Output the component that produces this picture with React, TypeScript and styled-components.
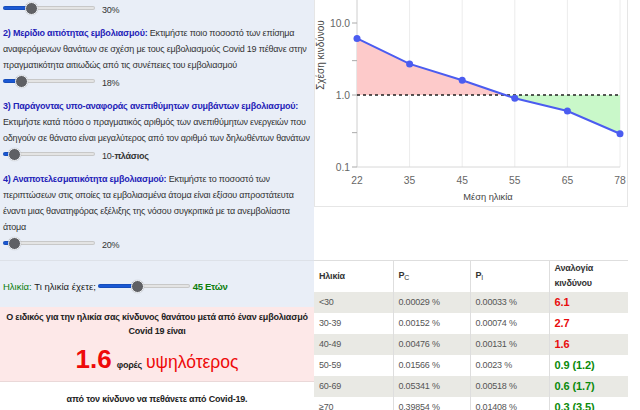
import React, { useState } from 'react';
import styled, { createGlobalStyle } from 'styled-components';

const FONT = '"Liberation Sans", Arial, sans-serif';

const GlobalStyle = createGlobalStyle`
  html, body {
    margin: 0;
    padding: 0;
    background: #fff;
  }

  body {
    font-family: ${FONT};
    font-size: 9px;
    letter-spacing: -0.2px;
    color: #333;
  }
`;

const Page = styled.div`
  display: grid;
  grid-template-columns: 314px 314px;
  grid-template-rows: 260px 150px;
  width: 628px;
  height: 410px;
  overflow: hidden;
`;

const SettingsPanel = styled.div`
  display: flex;
  flex-direction: column;
  background: #e9eef7;
  padding: 0 0 0 3px;
  overflow: hidden;
`;

const Para = styled.p`
  margin: 10px 0 0;
  line-height: 16px;
  color: #333;
`;

const Heading = styled.span`
  font-weight: bold;
  color: #1f22b8;
`;

const SliderRow = styled.div`
  display: flex;
  align-items: center;
  gap: 7px;
  height: 14px;
  margin-top: 1px;
`;

const SliderValue = styled.span`
  padding-top: 3px;
  color: #333;
`;

const Range = styled.input.attrs({ type: 'range' })<{ $width: number }>`
  -webkit-appearance: none;
  appearance: none;
  width: ${(p) => p.$width}px;
  height: 4px;
  margin: 0;
  border-radius: 2px;
  box-shadow: inset 0 0 0 1px rgba(0, 0, 0, 0.12);
  outline: none;
  flex-shrink: 0;

  &::-webkit-slider-thumb {
    -webkit-appearance: none;
    appearance: none;
    width: 13px;
    height: 13px;
    border-radius: 50%;
    background: #5f6064;
    border: 1px solid #f4f6fa;
    box-shadow: 0 0 1px rgba(0, 0, 0, 0.3);
    cursor: pointer;
  }
`;

type SliderProps = { min: number; max: number; initial: number; width?: number };

const Slider = ({ min, max, initial, width = 92 }: SliderProps) => {
  const [value, setValue] = useState(initial);
  const fill = 6.5 + ((value - min) / (max - min)) * (width - 13);
  return (
    <Range
      $width={width}
      min={min}
      max={max}
      value={value}
      onChange={(e) => setValue(Number(e.target.value))}
      style={{
        background: `linear-gradient(to right, #1a58d4 0, #1a58d4 ${fill}px, #e4e4e4 ${fill}px)`,
      }}
    />
  );
};

const ChartColumn = styled.div`
  background: #fff;
`;

const ChartCard = styled.div`
  height: 206px;
  border: 1px solid #e6e6e6;
  border-top: none;
  background: #fff;

  svg {
    display: block;
  }
`;

const ResultPanel = styled.div`
  display: flex;
  flex-direction: column;
  border-top: 1px solid #dde1e8;
`;

const AgeRow = styled.div`
  display: flex;
  align-items: center;
  height: 46px;
  padding: 4px 3px 0;
  box-sizing: border-box;
  background: #e9eef7;
  font-size: 9.5px;
  letter-spacing: 0;
  color: #222;
`;

const Green = styled.span<{ $bold?: boolean }>`
  color: #0b7d0b;
  font-weight: ${(p) => (p.$bold ? 'bold' : 'normal')};
  letter-spacing: ${(p) => (p.$bold ? '-0.3px' : '0')};
`;

const AgeSliderWrap = styled.span`
  margin: 0 3px 0 2px;
  display: flex;
  align-items: center;
`;

const RiskBox = styled.div`
  height: 75px;
  box-sizing: border-box;
  padding: 3px 2px 0;
  background: #fde8e8;
  border-bottom: 1px solid #ead8d8;
  text-align: center;
  font-weight: bold;
  color: #222;
  line-height: 14px;
`;

const BigLine = styled.div`
  margin-top: 5px;
  line-height: 32px;
  color: #ee0a0a;
`;

const BigNumber = styled.span`
  font-size: 26px;
  font-weight: bold;
  letter-spacing: 0;
`;

const Times = styled.span`
  color: #222;
  margin: 0 4px 0 5px;
`;

const Higher = styled.span`
  font-size: 17.5px;
  font-weight: normal;
  letter-spacing: 0;
`;

const Footer = styled.div`
  padding-top: 12px;
  text-align: center;
  font-weight: bold;
  color: #222;
`;

const Table = styled.table`
  width: 314px;
  border-collapse: collapse;
  table-layout: fixed;
  border-top: 1px solid #dedede;
`;

const Th = styled.th<{ $w: number }>`
  box-sizing: border-box;
  width: ${(p) => p.$w}px;
  height: 31px;
  padding: 0 5px;
  text-align: left;
  vertical-align: middle;
  font-weight: bold;
  color: #333;
  line-height: 15px;
  border-left: 1px solid #dedede;

  &:first-child {
    border-left: none;
  }

  sub {
    font-size: 7px;
    font-weight: normal;
    vertical-align: -2px;
  }
`;

const Tr = styled.tr<{ $shade: boolean }>`
  background: ${(p) => (p.$shade ? '#e9e9e4' : '#fff')};
`;

const Td = styled.td`
  height: 21px;
  padding: 0 5px;
  color: #555;
  border-left: 1px solid #dedede;

  &:first-child {
    border-left: none;
  }
`;

const Ratio = styled.td<{ $high: boolean }>`
  height: 21px;
  padding: 0 5px;
  border-left: 1px solid #dedede;
  font-size: 11px;
  letter-spacing: -0.1px;
  font-weight: bold;
  color: ${(p) => (p.$high ? '#e80c0c' : '#0b8a0b')};
`;

const rows = [
  ['<30', '0.00029 %', '0.00033 %', '6.1'],
  ['30-39', '0.00152 %', '0.00074 %', '2.7'],
  ['40-49', '0.00476 %', '0.00131 %', '1.6'],
  ['50-59', '0.01566 %', '0.0023 %', '0.9 (1.2)'],
  ['60-69', '0.05341 %', '0.00518 %', '0.6 (1.7)'],
  ['≥70', '0.39854 %', '0.01408 %', '0.3 (3.5)'],
];

const ages = [22, 35, 45, 55, 65, 78];
const risks = [6.1, 2.7, 1.6, 0.9, 0.6, 0.29];

const xAt = (i: number) => 42 + i * 52.6;
const yAt = (v: number) => 95 - 72 * Math.log10(v);

const RiskChart = () => {
  const pts = risks.map((v, i) => [xAt(i), yAt(v)]);
  // find where the curve crosses the 1.0 line
  let cross = 0;
  for (let i = 0; i < pts.length - 1; i++) {
    if (pts[i][1] <= 95 && pts[i + 1][1] > 95) {
      const t = (95 - pts[i][1]) / (pts[i + 1][1] - pts[i][1]);
      cross = pts[i][0] + t * (pts[i + 1][0] - pts[i][0]);
      break;
    }
  }
  const above = pts.filter((p) => p[1] <= 95);
  const below = pts.filter((p) => p[1] > 95);
  const red = [...above.map((p) => p.join(',')), `${cross},95`, `${pts[0][0]},95`].join(' ');
  const green = [`${cross},95`, ...below.map((p) => p.join(',')), `${pts[pts.length - 1][0]},95`].join(' ');
  const line = pts.map((p) => p.join(',')).join(' ');

  return (
    <svg width="312" height="206" viewBox="0 0 312 206" fontFamily={FONT} letterSpacing="0">
      {ages.map((a, i) => (
        <line key={a} x1={xAt(i)} y1={0} x2={xAt(i)} y2={167} stroke="#ececec" />
      ))}
      <line x1={42} y1={0} x2={42} y2={167} stroke="#d8d8d8" />
      <line x1={42} y1={167} x2={305} y2={167} stroke="#d8d8d8" />
      {[10, 3, 1, 0.3, 0.1].map((v) => (
        <line key={v} x1={37} y1={yAt(v)} x2={42} y2={yAt(v)} stroke="#aaa" />
      ))}
      <g fill="#666" fontSize="10.3">
        <text x={35} y={yAt(10) + 4} textAnchor="end">10.0</text>
        <text x={35} y={yAt(1) + 4} textAnchor="end">1.0</text>
        <text x={35} y={yAt(0.1) + 4} textAnchor="end">0.1</text>
        {ages.map((a, i) => (
          <text key={a} x={xAt(i)} y={184} textAnchor="middle">{a}</text>
        ))}
      </g>
      <text x={173} y={200} textAnchor="middle" fill="#444" fontSize="9.3">
        Μέση ηλικία
      </text>
      <text transform="translate(9 55) rotate(-90)" textAnchor="middle" fill="#444" fontSize="10">
        Σχέση κινδύνου
      </text>
      <polygon points={red} fill="#fdcaca" />
      <polygon points={green} fill="#c9f8c9" />
      <line x1={42} y1={95} x2={305} y2={95} stroke="#222" strokeWidth="1.3" strokeDasharray="3 3" />
      <polyline points={line} fill="none" stroke="#4b5cf0" strokeWidth="2" />
      {pts.map((p, i) => (
        <circle key={i} cx={p[0]} cy={p[1]} r="3.5" fill="#4b5cf0" />
      ))}
    </svg>
  );
};

export default function App() {
  return (
    <>
      <GlobalStyle />
      <Page>
        <SettingsPanel>
          <SliderRow>
            <Slider min={0} max={100} initial={28} />
            <SliderValue>30%</SliderValue>
          </SliderRow>
          <Para>
            <Heading>2) Μερίδιο αιτιότητας εμβολιασμού:</Heading> Εκτιμήστε ποιο ποσοστό των επίσημα
            αναφερόμενων θανάτων σε σχέση με τους εμβολιασμούς Covid 19 πέθανε στην πραγματικότητα
            αιτιωδώς από τις συνέπειες του εμβολιασμού
          </Para>
          <SliderRow>
            <Slider min={0} max={100} initial={15} />
            <SliderValue>18%</SliderValue>
          </SliderRow>
          <Para>
            <Heading>3) Παράγοντας υπο-αναφοράς ανεπιθύμητων συμβάντων εμβολιασμού:</Heading> Εκτιμήστε
            κατά πόσο ο πραγματικός αριθμός των ανεπιθύμητων ενεργειών που οδηγούν σε θάνατο είναι
            μεγαλύτερος από τον αριθμό των δηλωθέντων θανάτων
          </Para>
          <SliderRow>
            <Slider min={0} max={100} initial={6} />
            <SliderValue>
              10-<b>πλάσιος</b>
            </SliderValue>
          </SliderRow>
          <Para>
            <Heading>4) Αναποτελεσματικότητα εμβολιασμού:</Heading> Εκτιμήστε το ποσοστό των περιπτώσεων
            στις οποίες τα εμβολιασμένα άτομα είναι εξίσου απροστάτευτα έναντι μιας θανατηφόρας
            εξέλιξης της νόσου συγκριτικά με τα ανεμβολίαστα άτομα
          </Para>
          <SliderRow>
            <Slider min={0} max={100} initial={6} />
            <SliderValue>20%</SliderValue>
          </SliderRow>
        </SettingsPanel>

        <ChartColumn>
          <ChartCard>
            <RiskChart />
          </ChartCard>
        </ChartColumn>

        <ResultPanel>
          <AgeRow>
            <Green>Ηλικία:</Green>&nbsp;Τι ηλικία έχετε;
            <AgeSliderWrap>
              <Slider min={16} max={84} initial={45} />
            </AgeSliderWrap>
            <Green $bold>45 Ετών</Green>
          </AgeRow>
          <RiskBox>
            Ο ειδικός για την ηλικία σας κίνδυνος θανάτου μετά από έναν εμβολιασμό Covid 19 είναι
            <BigLine>
              <BigNumber>1.6</BigNumber>
              <Times>φορές</Times>
              <Higher>υψηλότερος</Higher>
            </BigLine>
          </RiskBox>
          <Footer>από τον κίνδυνο να πεθάνετε από Covid-19.</Footer>
        </ResultPanel>

        <Table>
          <thead>
            <tr>
              <Th $w={79}>Ηλικία</Th>
              <Th $w={77}>
                P<sub>C</sub>
              </Th>
              <Th $w={79}>
                P<sub>I</sub>
              </Th>
              <Th $w={79}>Αναλογία κινδύνου</Th>
            </tr>
          </thead>
          <tbody>
            {rows.map((r, i) => (
              <Tr key={r[0]} $shade={i % 2 === 0}>
                <Td>{r[0]}</Td>
                <Td>{r[1]}</Td>
                <Td>{r[2]}</Td>
                <Ratio $high={parseFloat(r[3]) > 1}>{r[3]}</Ratio>
              </Tr>
            ))}
          </tbody>
        </Table>
      </Page>
    </>
  );
}
